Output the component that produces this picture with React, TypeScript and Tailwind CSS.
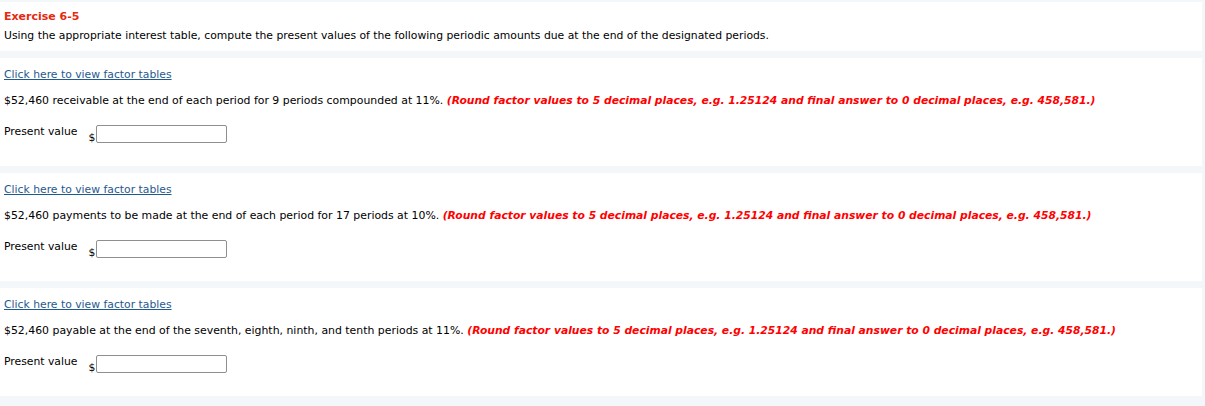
const font = { fontFamily: '"DejaVu Sans", Verdana, sans-serif' };

const questions = [
  "$52,460 receivable at the end of each period for 9 periods compounded at 11%.",
  "$52,460 payments to be made at the end of each period for 17 periods at 10%.",
  "$52,460 payable at the end of the seventh, eighth, ninth, and tenth periods at 11%.",
];

function Question({ text }: { text: string }) {
  return (
    <div className="bg-white px-1 pt-[10px] pb-[21px]">
      <a href="#" className="block text-[10.8px] leading-[14px] text-[#1f5a8f] underline underline-offset-1">
        Click here to view factor tables
      </a>
      <p className="mt-[12px] h-[14px] text-[10.9px] leading-[14px] text-black">
        {text}{" "}
        <span className="text-[10.75px] font-bold italic leading-[14px] text-[#ff0000]">
          (Round factor values to 5 decimal places, e.g. 1.25124 and final answer to 0 decimal places, e.g. 458,581.)
        </span>
      </p>
      <div className="mt-4 flex items-start">
        <span className="mt-px text-[10.8px] leading-[14px] text-black">Present value</span>
        <span className="ml-[11px] mt-[7px] text-[10.8px] leading-[14px] text-black">$</span>
        <input
          type="text"
          className="ml-px mt-px h-[18px] w-[131px] rounded-[2px] border border-[#8f8f8f] bg-white outline-none"
        />
      </div>
    </div>
  );
}

export default function App() {
  return (
    <div className="min-h-[406px] w-[1205px] bg-[#f4f7fa] pt-[2px] pr-[3px]" style={font}>
      <div className="flex flex-col gap-[7px]">
        <div className="bg-white px-1 pt-2 pb-2">
          <h1 className="text-[11px] font-bold leading-[14px] text-[#e6290f]">Exercise 6-5</h1>
          <p className="mt-[5px] text-[10.8px] leading-[14px] text-black">
            Using the appropriate interest table, compute the present values of the following periodic amounts due at the end of the designated periods.
          </p>
        </div>
        {questions.map((q, i) => (
          <Question key={i} text={q} />
        ))}
      </div>
    </div>
  );
}
